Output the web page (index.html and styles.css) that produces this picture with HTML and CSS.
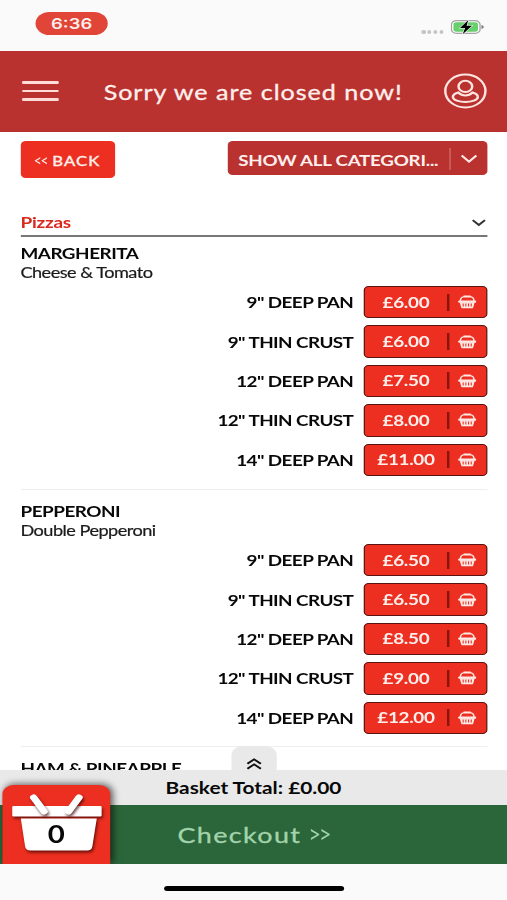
FILE: index.html
```html
<!DOCTYPE html>
<html lang="en">
<head>
    <meta charset="UTF-8">
    <meta name="viewport" content="width=device-width, initial-scale=1.0">
    <title>Pizza Menu</title>
    <link rel="stylesheet" href="styles.css">
</head>
<body>

<svg class="symbols" width="0" height="0">
    <symbol id="basket" viewBox="0 0 15 14">
        <path d="M2 6.4 V5.2 C2 3.4 3 2.2 4.6 1.7 M13 6.4 V5.2 C13 3.4 12 2.2 10.4 1.7" fill="none" stroke="#ffe9e6" stroke-width="1.2"/>
        <rect x="4.2" y="0.6" width="6.6" height="2" rx="1" fill="#ffe9e6"/>
        <rect x="0.1" y="5.6" width="14.8" height="2.1" rx="0.9" fill="#ffe9e6"/>
        <path d="M1.4 7.2 h12.2 l-1.2 5.2 q-0.2 0.9 -1.1 0.9 h-7.6 q-0.9 0 -1.1 -0.9 z" fill="#ffe9e6"/>
        <path d="M4.2 8.6 v3 M6.4 8.6 v3 M8.6 8.6 v3 M10.8 8.6 v3" stroke="#ec2f20" stroke-width="0.9"/>
    </symbol>
</svg>

<div class="app">
    <div class="status">
        <span class="time">6:36</span>
        <div class="status-right">
            <div class="dots"><i></i><i></i><i></i><i></i></div>
            <svg class="battery" width="28" height="16" viewBox="0 0 28 16">
                <rect x="0.6" y="1.6" width="23.4" height="12.8" rx="4" fill="#fafafa" stroke="#a5a5a5" stroke-width="1.1"/>
                <rect x="2.3" y="3.3" width="20" height="9.4" rx="2.4" fill="#67d06d"/>
                <path d="M25.2 6 v4 q1.8 -0.6 1.8 -2 t-1.8 -2z" fill="#777"/>
                <path d="M14.4 1 L7.6 9 h4.2 L9.8 15.2 L17.4 6.8 h-4.4 z" fill="#000" stroke="#fafafa" stroke-width="1" paint-order="stroke"/>
            </svg>
        </div>
    </div>

    <header class="header">
        <div class="burger"><i></i><i></i><i></i></div>
        <h1>Sorry we are closed now!</h1>
        <svg class="user" width="36" height="36" viewBox="0 0 36 36" fill="none" stroke="#ffe4e0" stroke-width="2">
            <circle cx="18" cy="18" r="16.4"/>
            <circle cx="18" cy="13.4" r="5.6"/>
            <path d="M12.2 19.5 C9.2 20.6 7.8 22.3 7.8 24 C7.8 27.1 13.2 29.1 18 29.1 S28.2 27.1 28.2 24 C28.2 22.3 26.8 20.6 23.8 19.5 C22 21.6 20 22.4 18 22.4 S14 21.6 12.2 19.5 Z"/>
        </svg>
    </header>

    <main class="menu">
        <div class="toolbar">
            <button class="back"><span>&lt;&lt;</span>BACK</button>
            <button class="categories">
                <span class="categories-text">SHOW ALL CATEGORI...</span>
                <svg width="14" height="10" viewBox="0 0 14 10" fill="none" stroke="#ffe9e6" stroke-width="1.8"><path d="M1 1.5 L7 7.7 L13 1.5"/></svg>
            </button>
        </div>

        <div class="section">
            <h2>Pizzas</h2>
            <svg width="12" height="8" viewBox="0 0 12 8" fill="none" stroke="#333" stroke-width="1.8"><path d="M1 1.2 L6 6 L11 1.2"/></svg>
        </div>

        <article class="item">
            <h3>MARGHERITA</h3>
            <p>Cheese &amp; Tomato</p>
            <div class="row"><span>9" DEEP PAN</span><button class="price"><b>£6.00</b><svg><use href="#basket"/></svg></button></div>
            <div class="row"><span>9" THIN CRUST</span><button class="price"><b>£6.00</b><svg><use href="#basket"/></svg></button></div>
            <div class="row"><span>12" DEEP PAN</span><button class="price"><b>£7.50</b><svg><use href="#basket"/></svg></button></div>
            <div class="row"><span>12" THIN CRUST</span><button class="price"><b>£8.00</b><svg><use href="#basket"/></svg></button></div>
            <div class="row"><span>14" DEEP PAN</span><button class="price"><b>£11.00</b><svg><use href="#basket"/></svg></button></div>
        </article>

        <article class="item">
            <h3>PEPPERONI</h3>
            <p>Double Pepperoni</p>
            <div class="row"><span>9" DEEP PAN</span><button class="price"><b>£6.50</b><svg><use href="#basket"/></svg></button></div>
            <div class="row"><span>9" THIN CRUST</span><button class="price"><b>£6.50</b><svg><use href="#basket"/></svg></button></div>
            <div class="row"><span>12" DEEP PAN</span><button class="price"><b>£8.50</b><svg><use href="#basket"/></svg></button></div>
            <div class="row"><span>12" THIN CRUST</span><button class="price"><b>£9.00</b><svg><use href="#basket"/></svg></button></div>
            <div class="row"><span>14" DEEP PAN</span><button class="price"><b>£12.00</b><svg><use href="#basket"/></svg></button></div>
        </article>

        <article class="item">
            <h3>HAM &amp; PINEAPPLE</h3>
        </article>
    </main>

    <footer class="footer">
        <div class="expand">
            <svg width="13" height="12" viewBox="0 0 13 12" fill="none" stroke="#111" stroke-width="1.8"><path d="M1 5.8 L6.5 1.4 L12 5.8 M1 10.8 L6.5 6.4 L12 10.8"/></svg>
        </div>
        <div class="total">Basket Total: £0.00</div>
        <div class="checkout">Checkout<span>&gt;&gt;</span></div>
        <div class="basket">
            <svg width="88" height="79" viewBox="0 0 88 79">
                <g class="basket-shape" fill="#fff">
                    <rect x="8" y="21" width="73" height="10.5" rx="1"/>
                    <path d="M15 33.5 H77 L73.4 61.5 Q73 65.5 69 65.5 H23 Q19 65.5 18.5 61.5 Z"/>
                </g>
                <g class="basket-shape" stroke="#fff" stroke-width="6" stroke-linecap="round">
                    <path d="M25.5 12.5 L34 26.5"/>
                    <path d="M62.5 12.5 L54 26.5"/>
                </g>
            </svg>
            <span class="count">0</span>
        </div>
        <div class="home"><i></i></div>
    </footer>
</div>

</body>
</html>
```

FILE: styles.css
```css
* {
    box-sizing: border-box;
}
body {
    margin: 0;
    font-family: Lato, sans-serif;
    background: #fff;
    color: #080808;
    overflow: hidden;
}
h1, h2, h3, p {
    margin: 0;
}
button {
    font-family: inherit;
    border: none;
    padding: 0;
}
.symbols {
    display: none;
}
.app {
    width: 414px;
    height: 900px;
    display: flex;
    flex-direction: column;
    transform: scaleX(1.22464);
    transform-origin: 0 0;
    overflow: hidden;
}
.status {
    flex: none;
    height: 51px;
    background: #fafafa;
    display: flex;
    justify-content: space-between;
    align-items: flex-start;
    padding: 12px 18px 0 29px;
}
.time {
    width: 59px;
    height: 23px;
    line-height: 24px;
    border-radius: 12px;
    background: #e04537;
    color: #ffefec;
    font-family: Inter, sans-serif;
    font-size: 15px;
    font-weight: 600;
    text-align: center;
}
.status-right {
    display: flex;
    gap: 6px;
    padding-top: 7px;
}
.dots {
    display: flex;
    gap: 1.5px;
    padding-top: 10.5px;
}
.dots i {
    width: 3.3px;
    height: 4px;
    border-radius: 50%;
    background: #c4c4c4;
}
.header {
    flex: none;
    height: 81px;
    background: #b9322f;
    display: flex;
    align-items: center;
    padding: 0 16px 2px 17.5px;
}
.burger {
    width: 30px;
    display: flex;
    flex-direction: column;
    gap: 6px;
    padding-top: 1px;
}
.burger i {
    height: 2.6px;
    border-radius: 1px;
    background: #ffdcd8;
}
.header h1 {
    flex: 1;
    text-align: center;
    font-size: 20.5px;
    font-weight: 400;
    letter-spacing: 0.8px;
    color: #ffefec;
    white-space: nowrap;
    -webkit-text-stroke: 0.3px #ffefec;
    padding: 2px 0 0 4px;
}
.menu {
    flex: 1;
    min-height: 0;
    overflow: hidden;
    padding: 9px 16px 0 16.7px;
}
.toolbar {
    display: flex;
    justify-content: space-between;
    align-items: flex-start;
}
.back {
    width: 77px;
    height: 37px;
    border-radius: 4px;
    background: #ec2f20;
    color: #ffefec;
    font-size: 13.6px;
    letter-spacing: 0.9px;
    -webkit-text-stroke: 0.4px #ffefec;
}
.back span {
    display: inline-block;
    font-size: 15px;
    letter-spacing: -1.5px;
    transform: scaleX(0.75);
    transform-origin: 100% 50%;
    -webkit-text-stroke: 0;
    margin: 0 4px 0 -4px;
}
.categories {
    width: 212px;
    height: 34px;
    border-radius: 4px;
    background: #b9322f;
    color: #ffefec;
    font-size: 15.3px;
    letter-spacing: -0.2px;
    font-weight: 700;
    display: flex;
    align-items: center;
    justify-content: space-between;
    padding: 2px 8px 0 8.5px;
}
.categories-text {
    width: 173px;
    height: 22px;
    line-height: 24px;
    text-align: left;
    white-space: nowrap;
    border-right: 1px solid #d3736c;
}
.section {
    height: 58.5px;
    display: flex;
    justify-content: space-between;
    align-items: flex-end;
    border-bottom: 2px solid #777;
    padding-bottom: 4px;
}
.section h2 {
    font-size: 15.5px;
    line-height: 18px;
    letter-spacing: -0.2px;
    color: #d9281e;
}
.section svg {
    margin: 0 1px 4px 0;
}
.item {
    height: 257.7px;
    padding-top: 6px;
    display: flex;
    flex-direction: column;
}
.item + .item {
    border-top: 1.5px solid #eee;
    padding-top: 11px;
}
.item:first-of-type {
    height: 252px;
}
.item h3 {
    font-size: 15.4px;
    line-height: 20px;
    letter-spacing: -0.38px;
}
.item p {
    font-size: 14.8px;
    line-height: 19px;
    letter-spacing: -0.42px;
    margin-bottom: 1px;
    color: #1a1a1a;
    -webkit-text-stroke: 0.2px #1a1a1a;
}
.row {
    flex: none;
    height: 39.4px;
    display: flex;
    align-items: center;
    justify-content: flex-end;
    gap: 8.5px;
    font-size: 15.4px;
    font-weight: 700;
    letter-spacing: -0.47px;
}
.price {
    width: 101px;
    height: 32.5px;
    border: 1.5px solid #5a1410;
    border-radius: 4px;
    background: #ec2f20;
    color: #ffefec;
    font-size: 15.4px;
    letter-spacing: -0.25px;
    display: flex;
    align-items: center;
}
.price b {
    width: 69px;
    height: 17px;
    line-height: 17px;
    border-right: 2px solid #8b150e;
}
.price svg {
    width: 15px;
    height: 14px;
    margin-left: 6.5px;
}
.footer {
    flex: none;
    position: relative;
    height: 130px;
}
.expand {
    position: absolute;
    left: 189px;
    top: -24.5px;
    width: 37px;
    height: 25px;
    border-radius: 9px 9px 0 0;
    background: #e9e9e9;
    display: flex;
    justify-content: center;
    padding-top: 12px;
}
.total {
    height: 35px;
    line-height: 36px;
    background: #e9e9e9;
    text-align: center;
    font-size: 17px;
    font-weight: 700;
}
.checkout {
    height: 59px;
    line-height: 59px;
    background: #2b663a;
    color: #a3d3aa;
    text-align: center;
    font-size: 22px;
    letter-spacing: 1.1px;
    -webkit-text-stroke: 0.3px #a3d3aa;
}
.checkout span {
    display: inline-block;
    font-size: 25px;
    line-height: 1;
    letter-spacing: -2.5px;
    transform: scaleX(0.7);
    transform-origin: 0 50%;
    -webkit-text-stroke: 0;
    margin: 0 -7px 0 6px;
}
.basket {
    position: absolute;
    left: 2px;
    top: 15px;
    width: 88px;
    height: 79px;
    border-radius: 9px 9px 0 0;
    background: #ec2f20;
    box-shadow: 2px -1px 7px rgba(0, 0, 0, 0.6);
}
.basket-shape {
    filter: drop-shadow(1px 2px 1.5px rgba(60, 0, 0, 0.75));
}
.count {
    position: absolute;
    left: 0;
    top: 35px;
    width: 88px;
    line-height: 28px;
    text-align: center;
    font-size: 24px;
    font-weight: 700;
}
.home {
    position: relative;
    height: 36px;
    background: #fafafa;
    display: flex;
    justify-content: center;
    padding-top: 22px;
}
.home i {
    width: 147px;
    height: 5px;
    border-radius: 3px;
    background: #000;
}
```
